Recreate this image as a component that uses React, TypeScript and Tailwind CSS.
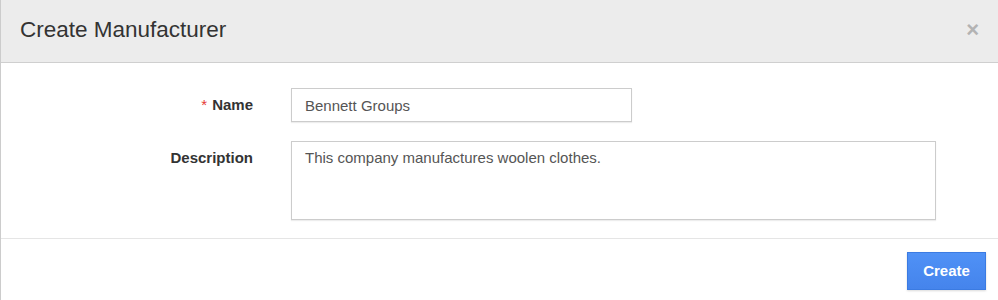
export default function App() {
  return (
    <div className="w-[998px] h-[300px] bg-white border-l border-[#cccccc] [font-family:'Liberation_Sans',Arial,sans-serif] text-[#333]">
      {/* Header */}
      <div className="h-[63px] bg-[#ececec] border-b border-[#cfcfcf] flex items-center justify-between pl-[19px] pr-[19px]">
        <h2 className="text-[22.5px] leading-none text-[#333] pb-[2px]">Create Manufacturer</h2>
        <button
          className="text-[#b3b3b3] text-[22px] font-bold leading-none pb-[2px]"
          aria-label="Close"
        >
          ×
        </button>
      </div>

      {/* Body */}
      <div className="pt-[25px] pb-[18px]">
        <div className="flex items-center">
          <label className="w-[252px] text-right text-[15px] font-bold text-[#333]">
            <span className="text-[#e53935] font-normal mr-[5px]">*</span>
            Name
          </label>
          <input
            defaultValue="Bennett Groups"
            className="ml-[38px] w-[341px] h-[34px] border border-[#cccccc] px-[13px] text-[15px] text-[#555] shadow-[0_1px_1px_rgba(0,0,0,0.07)] outline-none [font-family:'Liberation_Sans',Arial,sans-serif]"
          />
        </div>
        <div className="flex items-start mt-[19px]">
          <label className="w-[252px] text-right text-[15px] font-bold text-[#333] pt-[6px]">
            Description
          </label>
          <textarea
            defaultValue="This company manufactures woolen clothes."
            className="ml-[38px] w-[645px] h-[79px] border border-[#cccccc] px-[13px] py-[7px] text-[15px] leading-[18px] text-[#555] shadow-[0_1px_1px_rgba(0,0,0,0.07)] outline-none resize-none [font-family:'Liberation_Sans',Arial,sans-serif]"
          />
        </div>
      </div>

      {/* Footer */}
      <div className="border-t border-[#e5e5e5] flex justify-end pt-[13px] pr-[12px]">
        <button className="w-[79px] h-[38px] bg-gradient-to-b from-[#4f91f6] to-[#4584ec] border border-[#3b7be2] text-white text-[15px] font-bold shadow-[0_1px_2px_rgba(0,0,0,0.15)]">
          Create
        </button>
      </div>
    </div>
  );
}
